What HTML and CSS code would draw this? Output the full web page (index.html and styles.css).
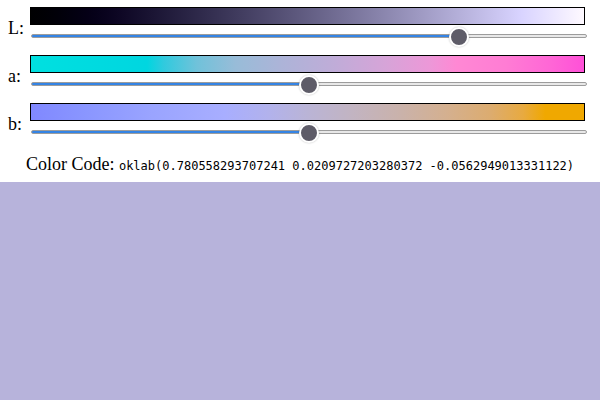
FILE: index.html
```html
<!DOCTYPE html>
<html>
<head>
<meta charset="utf-8">
<link rel="stylesheet" href="styles.css">
</head>
<body>
<div class="controls">
  <div class="row">
    <label class="lbl">L:</label>
    <div class="track">
      <div class="bar bar-l"></div>
      <input class="slider" type="range" min="0" max="1" step="0.001" value="0.7806" style="--p: 0.7806">
    </div>
  </div>
  <div class="row">
    <label class="lbl">a:</label>
    <div class="track">
      <div class="bar bar-a"></div>
      <input class="slider" type="range" min="-0.4" max="0.4" step="0.001" value="0" style="--p: 0.5">
    </div>
  </div>
  <div class="row">
    <label class="lbl">b:</label>
    <div class="track">
      <div class="bar bar-b"></div>
      <input class="slider" type="range" min="-0.4" max="0.4" step="0.001" value="0" style="--p: 0.5">
    </div>
  </div>
</div>
<p class="code">Color Code: <code class="value">oklab(0.780558293707241 0.0209727203280372 -0.0562949013331122)</code></p>
<div class="swatch"></div>
</body>
</html>
```
FILE: styles.css
```css
html, body {
  margin: 0;
  padding: 0;
  background: #fff;
}
body {
  font-family: "Liberation Serif", serif;
  font-size: 18px;
}
.controls {
  padding: 7px 15px 0 8px;
}
.row {
  display: flex;
  align-items: flex-start;
  margin-bottom: 9px;
}
.lbl {
  width: 22px;
  flex: none;
  line-height: 20px;
  padding-top: 11px;
}
.track {
  flex: 1;
  display: flex;
  flex-direction: column;
}
.bar {
  height: 16px;
  border: 1px solid #000;
}
.bar-l {
  background: linear-gradient(to right in oklab, oklab(0 0.021 -0.056), oklab(1 0.021 -0.056));
}
.bar-a {
  background: linear-gradient(to right,
    #00e0e0 0%, #00d6e0 21%, #30cade 24%, #70c2da 30%, #98bcd8 37%,
    #acb4d8 45%, #c0acd8 55%, #d6a4d8 64%, #ec98d8 72%, #ff88d4 77%,
    #ff7cd4 86%, #ff66d6 94%, #ff50d8 100%);
}
.bar-b {
  background: linear-gradient(to right,
    #8088ff 0%, #8a96ff 10%, #9aa4ff 22%, #a8aeff 35%, #b2b2ec 43%,
    #bab4d6 50%, #c2b4c2 58%, #cab2aa 67%, #d4b090 75%, #dcac70 83%,
    #e8aa40 89%, #f0a800 93%, #f0a800 100%);
}
.slider {
  -webkit-appearance: none;
  appearance: none;
  display: block;
  width: calc(100% + 1px);
  height: 20px;
  margin: 1px 0 0 1px;
  padding: 0;
  background: transparent;
}
.slider::-webkit-slider-runnable-track {
  height: 4px;
  border: 1px solid #9c9c9c;
  border-radius: 4px;
  background: linear-gradient(to right,
    #3584e4 calc(10px + var(--p) * (100% - 20px)),
    #e8e8e8 calc(10px + var(--p) * (100% - 20px)));
}
.slider::-webkit-slider-thumb {
  -webkit-appearance: none;
  appearance: none;
  width: 20px;
  height: 20px;
  margin-top: -8px;
  box-sizing: border-box;
  border-radius: 50%;
  border: 2px solid #fff;
  background: #5e5c68;
  box-shadow: 0 0 2px rgba(0, 0, 0, 0.25);
}
.code {
  margin: 0;
  height: 22px;
  padding: 2px 0 7px;
  line-height: 22px;
  text-align: center;
}
.value {
  font-family: "DejaVu Sans Mono", monospace;
  font-size: 12px;
  line-height: 1;
}
.swatch {
  height: 218px;
  background: #b7b3db;
}
```
